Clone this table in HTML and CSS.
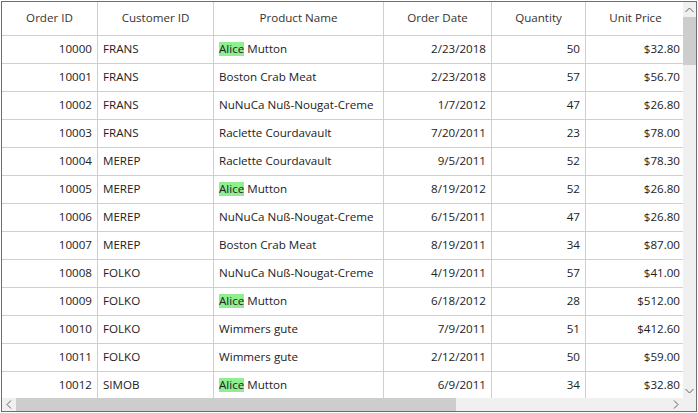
FILE: index.html
```html
<!DOCTYPE html>
<html>
<head>
<meta charset="utf-8">
<link rel="stylesheet" href="styles.css">
</head>
<body>
<div class="grid">
  <div class="main">
    <div class="viewport">
      <table class="table">
        <colgroup>
          <col class="c1"><col class="c2"><col class="c3"><col class="c4"><col class="c5"><col class="c6">
        </colgroup>
        <thead>
          <tr><th>Order ID</th><th>Customer ID</th><th>Product Name</th><th>Order Date</th><th>Quantity</th><th>Unit Price</th></tr>
        </thead>
        <tbody>
          <tr><td class="r">10000</td><td>FRANS</td><td><span class="hl">Alice</span> Mutton</td><td class="r">2/23/2018</td><td class="r">50</td><td class="r">$32.80</td></tr>
          <tr><td class="r">10001</td><td>FRANS</td><td>Boston Crab Meat</td><td class="r">2/23/2018</td><td class="r">57</td><td class="r">$56.70</td></tr>
          <tr><td class="r">10002</td><td>FRANS</td><td>NuNuCa Nuß-Nougat-Creme</td><td class="r">1/7/2012</td><td class="r">47</td><td class="r">$26.80</td></tr>
          <tr><td class="r">10003</td><td>FRANS</td><td>Raclette Courdavault</td><td class="r">7/20/2011</td><td class="r">23</td><td class="r">$78.00</td></tr>
          <tr><td class="r">10004</td><td>MEREP</td><td>Raclette Courdavault</td><td class="r">9/5/2011</td><td class="r">52</td><td class="r">$78.30</td></tr>
          <tr><td class="r">10005</td><td>MEREP</td><td><span class="hl">Alice</span> Mutton</td><td class="r">8/19/2012</td><td class="r">52</td><td class="r">$26.80</td></tr>
          <tr><td class="r">10006</td><td>MEREP</td><td>NuNuCa Nuß-Nougat-Creme</td><td class="r">6/15/2011</td><td class="r">47</td><td class="r">$26.80</td></tr>
          <tr><td class="r">10007</td><td>MEREP</td><td>Boston Crab Meat</td><td class="r">8/19/2011</td><td class="r">34</td><td class="r">$87.00</td></tr>
          <tr><td class="r">10008</td><td>FOLKO</td><td>NuNuCa Nuß-Nougat-Creme</td><td class="r">4/19/2011</td><td class="r">57</td><td class="r">$41.00</td></tr>
          <tr><td class="r">10009</td><td>FOLKO</td><td><span class="hl">Alice</span> Mutton</td><td class="r">6/18/2012</td><td class="r">28</td><td class="r">$512.00</td></tr>
          <tr><td class="r">10010</td><td>FOLKO</td><td>Wimmers gute</td><td class="r">7/9/2011</td><td class="r">51</td><td class="r">$412.60</td></tr>
          <tr><td class="r">10011</td><td>FOLKO</td><td>Wimmers gute</td><td class="r">2/12/2011</td><td class="r">50</td><td class="r">$59.00</td></tr>
          <tr><td class="r">10012</td><td>SIMOB</td><td><span class="hl">Alice</span> Mutton</td><td class="r">6/9/2011</td><td class="r">34</td><td class="r">$32.80</td></tr>
        </tbody>
      </table>
    </div>
    <div class="vscroll">
      <div class="sbtn"><svg width="9" height="6" viewBox="0 0 9 6"><path d="M0.5 5 L4.5 1 L8.5 5" fill="none" stroke="#606060" stroke-width="1"/></svg></div>
      <div class="vtrack"><div class="vthumb"></div></div>
      <div class="sbtn"><svg width="9" height="6" viewBox="0 0 9 6"><path d="M0.5 1 L4.5 5 L8.5 1" fill="none" stroke="#606060" stroke-width="1"/></svg></div>
    </div>
  </div>
  <div class="hbar">
    <div class="hscroll">
      <div class="hbtn"><svg width="6" height="9" viewBox="0 0 6 9"><path d="M5 0.5 L1 4.5 L5 8.5" fill="none" stroke="#606060" stroke-width="1"/></svg></div>
      <div class="htrack"><div class="hthumb"></div></div>
      <div class="hbtn"><svg width="6" height="9" viewBox="0 0 6 9"><path d="M1 0.5 L5 4.5 L1 8.5" fill="none" stroke="#606060" stroke-width="1"/></svg></div>
    </div>
    <div class="corner"></div>
  </div>
</div>
</body>
</html>
```
FILE: styles.css
```css
html, body {
  margin: 0;
  padding: 0;
  background: #ffffff;
}
body {
  padding: 1px;
  font-family: "Open Sans", "Noto Sans", sans-serif;
  font-size: 11.6px;
  color: #222222;
}
.grid {
  width: 696px;
  height: 411px;
  box-sizing: border-box;
  border: 1px solid #6e6e6e;
  display: flex;
  flex-direction: column;
  background: #fff;
}
.main {
  flex: 1;
  display: flex;
  min-height: 0;
}
.viewport {
  flex: 1;
  overflow: hidden;
  min-width: 0;
}
.table {
  border-collapse: separate;
  border-spacing: 0;
  table-layout: fixed;
  width: 604px;
}
.c1 { width: 96px; }
.c2 { width: 116px; }
.c3 { width: 170px; }
.c4 { width: 108px; }
.c5 { width: 94px; }
.c6 { width: 100px; }
th, td {
  box-sizing: border-box;
  border-right: 1px solid #cfcfcf;
  border-bottom: 1px solid #cfcfcf;
  padding: 0 5px;
  white-space: nowrap;
  overflow: hidden;
}
th {
  height: 34px;
  font-weight: normal;
  text-align: center;
  color: #333333;
  padding-bottom: 3px;
}
td {
  height: 28px;
  text-align: left;
  padding-bottom: 3px;
}
td.r {
  text-align: right;
}
.hl {
  display: inline-block;
  background: #90ee90;
  line-height: 14px;
  height: 14px;
}
.vscroll {
  width: 13px;
  background: #f0f0f0;
  display: flex;
  flex-direction: column;
}
.sbtn {
  height: 15px;
  display: flex;
  align-items: center;
  justify-content: center;
}
.vtrack {
  flex: 1;
}
.vthumb {
  height: 48px;
  background: #cdcdcd;
}
.hbar {
  height: 13px;
  display: flex;
}
.hscroll {
  flex: 1;
  display: flex;
  background: #f0f0f0;
}
.hbtn {
  width: 14px;
  display: flex;
  align-items: center;
  justify-content: center;
}
.htrack {
  flex: 1;
  display: flex;
}
.hthumb {
  width: 440px;
  background: #cdcdcd;
}
.corner {
  width: 13px;
  background: #f0f0f0;
}
```
